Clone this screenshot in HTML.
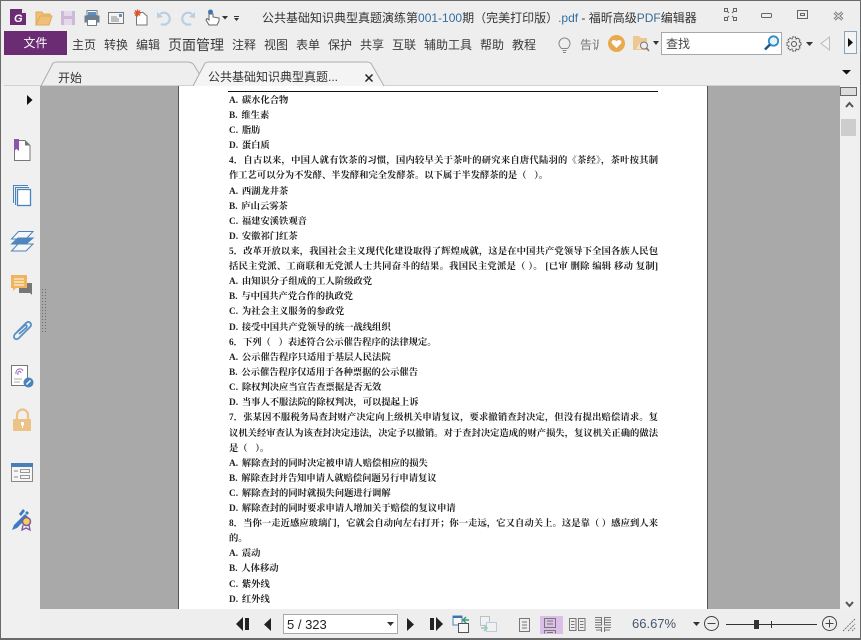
<!DOCTYPE html>
<html lang="zh"><head><meta charset="utf-8"><style>
html,body{margin:0;padding:0;width:861px;height:640px;overflow:hidden;background:#eeeeee}
body{position:relative;font-family:"Liberation Sans","Noto Sans CJK SC",sans-serif;color:#333}
.a{position:absolute}
.m{position:absolute;top:36px;font-size:12px;line-height:18px;color:#3a3a3a;white-space:nowrap}
.l{position:absolute;left:229px;width:429px;height:14px;margin-top:1px;font:700 9.3px/14px "Liberation Serif","Noto Serif CJK SC",serif;color:#222;white-space:nowrap;word-spacing:1.5px}
.j{text-align:justify;text-align-last:justify;white-space:normal;word-spacing:0}
svg{position:absolute;overflow:visible}
</style></head><body>
<!-- window border -->
<div class="a" style="left:0;top:0;width:861px;height:1px;background:#6a6a6a"></div>
<div class="a" style="left:0;top:0;width:1px;height:640px;background:#6a6a6a"></div>
<div class="a" style="left:860px;top:0;width:1px;height:640px;background:#6a6a6a"></div>
<div class="a" style="left:0;top:638px;width:861px;height:2px;background:#6a6a6a"></div>

<!-- quick access icons -->
<svg style="left:10px;top:9px" width="18" height="18"><path d="M0 0H12L16 4V16H0Z" fill="#6b2c74"/><path d="M12 0L16 4H12Z" fill="#eee"/><text x="4" y="13" font-family="Liberation Sans" font-size="11" font-weight="bold" font-style="italic" fill="#fff">G</text></svg>
<svg style="left:36px;top:11px" width="17" height="15"><path d="M0 14V1H6L7 3H14V5H4L0 14H13L16 5H4" fill="#f0c078" stroke="#e0a858"/></svg>
<svg style="left:61px;top:11px" width="15" height="14"><path d="M0 0H14V14H0Z" fill="#cdb8d6"/><rect x="3" y="0" width="8" height="5" fill="#e4d8ea"/><rect x="3" y="8" width="8" height="6" fill="#e4d8ea"/></svg>
<svg style="left:84px;top:10px" width="16" height="16"><rect x="3" y="0.5" width="10" height="5" fill="#fff" stroke="#6f7f8f"/><rect x="0.5" y="5.5" width="15" height="7" fill="#6f7f8f"/><rect x="3.5" y="9.5" width="9" height="6" fill="#fff" stroke="#6f7f8f"/><rect x="4" y="2" width="8" height="3" fill="#5a92c8"/></svg>
<svg style="left:108px;top:12px" width="16" height="12"><rect x="0.5" y="0.5" width="15" height="11" fill="#f4f4f4" stroke="#777"/><path d="M3 5H9M3 7H11M3 9H11" stroke="#888"/><rect x="11" y="2" width="3" height="3" fill="#5a92c8"/></svg>
<svg style="left:133px;top:9px" width="15" height="17"><path d="M3.500 3.500H10L14 7V16H3.500Z" fill="#fff" stroke="#777"/><path d="M1 4L8 4M4.500 0.500V7.500M2 1.500L7 6.500M7 1.500L2 6.500" stroke="#e0502a" stroke-width="1.300"/></svg>
<svg style="left:156px;top:11px" width="16" height="15"><path d="M4 3A6 6 0 1 1 5 13" fill="none" stroke="#b9cfe3" stroke-width="2.200"/><path d="M1 1L1 7L7 6Z" fill="#b9cfe3"/></svg>
<svg style="left:180px;top:11px" width="16" height="15"><path d="M12 3A6 6 0 1 0 11 13" fill="none" stroke="#b9cfe3" stroke-width="2.200"/><path d="M15 1L15 7L9 6Z" fill="#b9cfe3"/></svg>
<svg style="left:205px;top:9px" width="16" height="18"><circle cx="5.500" cy="3" r="2.500" fill="#3a78b8"/><path d="M4 5V11L2 9.500L1 11L4 16H12L14 12V9L8 8V5Z" fill="#fff" stroke="#666"/></svg>
<svg style="left:222px;top:16px" width="18" height="8"><path d="M0 0H6L3 3.500Z" fill="#333"/><path d="M12 0H17V1H12Z M12 2H17L14.500 5Z" fill="#333"/></svg>

<!-- title -->
<div class="a" style="left:262px;top:9px;font-size:12px;line-height:18px;white-space:nowrap;color:#333">公共基础知识典型真题演练第<span style="color:#2f6f9f">001-100</span>期（完美打印版）<span style="color:#2f6f9f">.pdf</span> - 福昕高级<span style="color:#3a6a90">PDF</span>编辑器</div>

<!-- window buttons -->
<svg style="left:724px;top:8px" width="14" height="14" fill="none" stroke="#666"><rect x="0.500" y="0.500" width="3" height="3"/><rect x="9.500" y="0.500" width="3" height="3"/><rect x="0.500" y="9.500" width="3" height="3"/><rect x="9.500" y="9.500" width="3" height="3"/><path d="M5 5L3 3M8 5L10 3M5 8L3 10M8 8L10 10"/></svg>
<svg style="left:761px;top:13px" width="12" height="6"><rect x="0.500" y="0.500" width="10" height="4" rx="1" fill="none" stroke="#666"/></svg>
<svg style="left:797px;top:10px" width="12" height="10" fill="none" stroke="#666"><rect x="0.500" y="0.500" width="10" height="8"/><rect x="3.500" y="3.500" width="4" height="2"/></svg>
<svg style="left:833px;top:11px" width="11" height="10" fill="none"><path d="M1.500 1.500L9.500 8.500M9.500 1.500L1.500 8.500" stroke="#777" stroke-width="3"/><path d="M1.500 1.500L9.500 8.500M9.500 1.500L1.500 8.500" stroke="#eee" stroke-width="1"/></svg>

<!-- menu bar -->
<div class="a" style="left:4px;top:31px;width:63px;height:24px;background:#6b2c74;color:#fff;font-size:12px;line-height:25px;text-align:center">文件</div>
<div class="m" style="left:72px">主页</div>
<div class="m" style="left:104px">转换</div>
<div class="m" style="left:136px">编辑</div>
<div class="m" style="left:168px;font-size:14px">页面管理</div>
<div class="m" style="left:232px">注释</div>
<div class="m" style="left:264px">视图</div>
<div class="m" style="left:296px">表单</div>
<div class="m" style="left:328px">保护</div>
<div class="m" style="left:360px">共享</div>
<div class="m" style="left:392px">互联</div>
<div class="m" style="left:424px">辅助工具</div>
<div class="m" style="left:480px">帮助</div>
<div class="m" style="left:512px">教程</div>

<svg style="left:558px;top:37px" width="13" height="17" fill="none" stroke="#888"><path d="M3.500 11.500C2 10 1 8.500 1 6.500A5.500 5.500 0 0 1 12 6.500C12 8.500 11 10 9.500 11.500Z"/><path d="M4.500 13.500H8.500M5 15.500H8"/></svg>
<div class="a" style="left:580px;top:36px;width:19px;height:18px;overflow:hidden;font-size:12px;line-height:18px;color:#777;white-space:nowrap">告诉</div>
<svg style="left:608px;top:35px" width="18" height="18"><circle cx="8.500" cy="8.500" r="8.500" fill="#e8a94f"/><path d="M8.500 13L4 8.500C2.500 6 5.500 3.500 8.500 6.200C11.500 3.500 14.500 6 13 8.500Z" fill="#fff"/></svg>
<svg style="left:633px;top:35px" width="18" height="18"><path d="M0 1H6L8 3H14V15H0Z" fill="#ecc994"/><path d="M3 14L7 8L11 14Z" fill="#f5e2c5"/><circle cx="11" cy="10.500" r="3.500" fill="#eee" stroke="#777"/><path d="M13.500 13L16 16" stroke="#777" stroke-width="1.500"/></svg>
<svg style="left:653px;top:41px" width="7" height="4"><path d="M0 0H6L3 4Z" fill="#333"/></svg>

<!-- search -->
<div class="a" style="left:661px;top:32px;width:119px;height:21px;border:1px solid #a3a9ae;background:#fff;box-sizing:content-box"></div>
<div class="a" style="left:666px;top:35px;font-size:12px;line-height:18px;color:#444">查找</div>
<svg style="left:763px;top:35px" width="17" height="16"><circle cx="10.500" cy="6" r="4.700" fill="#e8f3fa" stroke="#2d8fc2" stroke-width="1.800"/><path d="M7 9.500L2 14.500" stroke="#20507c" stroke-width="2.400"/></svg>
<svg style="left:786px;top:36px" width="16" height="16" fill="none" stroke="#555"><circle cx="8" cy="8" r="2.500"/><path d="M6.500 1H9.500L10 3L12 2L14 4L13 6L15 6.500V9.500L13 10L14 12L12 14L10 13L9.500 15H6.500L6 13L4 14L2 12L3 10L1 9.500V6.500L3 6L2 4L4 2L6 3Z" stroke-dasharray="2 0.500"/></svg>
<svg style="left:806px;top:42px" width="7" height="4"><path d="M0 0H7L3.500 4Z" fill="#333"/></svg>
<svg style="left:820px;top:36px" width="11" height="15"><path d="M9.500 1V14L1 7.500Z" fill="#f2f2f2" stroke="#bbb"/></svg>
<div class="a" style="left:844px;top:31px;width:11px;height:21px;border:1px solid #8aa3bb;background:#f4f4f4"></div>
<svg style="left:848px;top:38px" width="6" height="9"><path d="M0 0L5 4.500L0 9Z" fill="#111"/></svg>

<!-- tabs -->
<svg style="left:0;top:60px" width="861" height="28">
<path d="M41 26L52 5Q53 2 57 2H187Q192 2 194 5L203 20" fill="#eeeeee" stroke="#adadad"/>
<path d="M193 26L204 5Q205 2 209 2H366Q371 2 372 5L384 26" fill="#f4f4f4" stroke="#adadad"/>
<path d="M4 26H194M384 26H840" stroke="#b5b5b5" fill="none"/>
<path d="M842 10H851L846.500 14.500Z" fill="#111"/>
</svg>
<div class="a" style="left:58px;top:69px;font-size:12px;line-height:18px;color:#333">开始</div>
<div class="a" style="left:208px;top:68px;font-size:12px;line-height:18px;color:#333;white-space:nowrap">公共基础知识典型真题...</div>
<svg style="left:364px;top:73px" width="10" height="10"><path d="M1.500 1.500L8.500 8.500M8.500 1.500L1.500 8.500" stroke="#222" stroke-width="1.500"/></svg>

<!-- sidebar -->
<div class="a" style="left:1px;top:86px;width:39px;height:552px;background:#f0f0f0"></div>
<svg style="left:27px;top:95px" width="6" height="10"><path d="M0 0L5.500 5L0 10Z" fill="#111"/></svg>
<svg style="left:14px;top:140px" width="17" height="22"><path d="M0.500 0.500H11L16 5.500V20.500H0.500Z" fill="#fff" stroke="#777" stroke-width="1"/><path d="M11 0.500V5.500H16Z" fill="#777"/><path d="M0 -1H5V11L2.500 9L0 11Z" fill="#8e56a8"/></svg>
<svg style="left:13px;top:185px" width="19" height="23" fill="none" stroke="#4a84bc"><path d="M0.500 18V0.500H15"/><path d="M2.500 20V2.500H16"/><rect x="4.500" y="4.500" width="13" height="16" fill="#fff" stroke-width="1.300"/></svg>
<svg style="left:11px;top:231px" width="23" height="21"><path d="M7.500 0.500H22L15 8H0.500Z" fill="#f6f6f6" stroke="#4a84bc"/><path d="M7 7H22L15 13H0.500Z" fill="#4f86bd" stroke="#4a84bc"/><path d="M7 13H22L15 20H0.500Z" fill="#f6f6f6" stroke="#4a84bc"/></svg>
<svg style="left:11px;top:275px" width="22" height="23"><path d="M8 8H21V20L19 18H8Z" fill="#777"/><path d="M0 0H16V13H5L2 16V13H0Z" fill="#f0b45d"/><path d="M3 4H13M3 7H13M3 10H13" stroke="#fff"/></svg>
<svg style="left:12px;top:320px" width="21" height="23" fill="none" stroke="#5a8fc4" stroke-width="1.800"><path d="M5 12L14 3C17 0 21 4 18 7L7 18C4 21 0 18 3 14L12 6C14 4 16 6 14 8L7 14"/></svg>
<svg style="left:11px;top:365px" width="23" height="23"><rect x="0.500" y="0.500" width="16" height="20" fill="#fff" stroke="#777"/><path d="M5 9C4 4 11 2 12 6M7 10C6 6 10 5 10 8" fill="none" stroke="#9a6ab5"/><path d="M3 14H11M3 17H9" stroke="#aaa"/><circle cx="17.500" cy="17.500" r="5" fill="#4a84bc"/><path d="M15.500 19.500L19.500 15.500" stroke="#fff" stroke-width="1.500"/></svg>
<svg style="left:13px;top:409px" width="19" height="23"><path d="M4 10V6A5.500 5.500 0 0 1 15 6V10" fill="none" stroke="#ecc287" stroke-width="2.200"/><rect x="0" y="10" width="18" height="12" rx="1" fill="#ecc287"/><path d="M8 13H11V16.500H10V19H9V16.500H8Z" fill="#fff"/></svg>
<svg style="left:11px;top:463px" width="22" height="19"><rect x="0.500" y="0.500" width="21" height="18" fill="#f6f6f6" stroke="#888"/><rect x="0" y="0" width="22" height="4" fill="#4a7eb6"/><path d="M3 8H7M3 14H7" stroke="#888"/><rect x="9.500" y="6.500" width="9" height="3" fill="none" stroke="#999"/><rect x="9.500" y="12.500" width="9" height="3" fill="none" stroke="#999"/></svg>
<svg style="left:12px;top:508px" width="21" height="23"><path d="M0 22L2 17L13 6L16 9L5 20Z" fill="#3d7cc0"/><path d="M7 6L11 1L13 3L9 8Z M13 5L15 3L17 5L15 7Z" fill="#3d7cc0"/><circle cx="14.500" cy="13.500" r="4" fill="#f2d34f" stroke="#8258a0" stroke-width="1.500"/><path d="M11 17L10 22L14 20L18 22L17 17" fill="none" stroke="#8258a0" stroke-width="1.300"/></svg>

<!-- gray doc area -->
<div class="a" style="left:40px;top:86px;width:800px;height:523px;background:#a9a9a9"></div>
<svg style="left:42px;top:288px" width="5" height="45"><path d="M0.500 1V45M3.500 1V45" stroke="#6d6d6d" stroke-dasharray="1 2"/></svg>

<!-- page -->
<div class="a" style="left:178px;top:86px;width:1px;height:523px;background:#555"></div>
<div class="a" style="left:707px;top:86px;width:1px;height:523px;background:#555"></div>
<div class="a" style="left:179px;top:86px;width:528px;height:523px;background:#fff"></div>
<div class="a" style="left:228px;top:91px;width:430px;height:1px;background:#111"></div>

<div class="l" style="top:93px">A. 碳水化合物</div>
<div class="l" style="top:108px">B. 维生素</div>
<div class="l" style="top:123px">C. 脂肪</div>
<div class="l" style="top:138px">D. 蛋白质</div>
<div class="l j" style="top:153px">4．自古以来，中国人就有饮茶的习惯，国内较早关于茶叶的研究来自唐代陆羽的《茶经》，茶叶按其制</div>
<div class="l" style="top:168px">作工艺可以分为不发酵、半发酵和完全发酵茶。以下属于半发酵茶的是（&nbsp;&nbsp;）。</div>
<div class="l" style="top:184px">A. 西湖龙井茶</div>
<div class="l" style="top:199px">B. 庐山云雾茶</div>
<div class="l" style="top:214px">C. 福建安溪铁观音</div>
<div class="l" style="top:229px">D. 安徽祁门红茶</div>
<div class="l j" style="top:244px">5．改革开放以来，我国社会主义现代化建设取得了辉煌成就，这是在中国共产党领导下全国各族人民包</div>
<div class="l j" style="top:259px">括民主党派、工商联和无党派人士共同奋斗的结果。我国民主党派是（ ）。 [已审 删除 编辑 移动 复制]</div>
<div class="l" style="top:274px">A. 由知识分子组成的工人阶级政党</div>
<div class="l" style="top:289px">B. 与中国共产党合作的执政党</div>
<div class="l" style="top:304px">C. 为社会主义服务的参政党</div>
<div class="l" style="top:320px">D. 接受中国共产党领导的统一战线组织</div>
<div class="l" style="top:335px">6．下列（&nbsp;&nbsp;）表述符合公示催告程序的法律规定。</div>
<div class="l" style="top:350px">A. 公示催告程序只适用于基层人民法院</div>
<div class="l" style="top:365px">B. 公示催告程序仅适用于各种票据的公示催告</div>
<div class="l" style="top:380px">C. 除权判决应当宣告查票据是否无效</div>
<div class="l" style="top:395px">D. 当事人不服法院的除权判决，可以提起上诉</div>
<div class="l j" style="top:410px">7．张某因不服税务局查封财产决定向上级机关申请复议，要求撤销查封决定，但没有提出赔偿请求。复</div>
<div class="l j" style="top:426px">议机关经审查认为该查封决定违法，决定予以撤销。对于查封决定造成的财产损失，复议机关正确的做法</div>
<div class="l" style="top:441px">是（&nbsp;&nbsp;）。</div>
<div class="l" style="top:456px">A. 解除查封的同时决定被申请人赔偿相应的损失</div>
<div class="l" style="top:471px">B. 解除查封并告知申请人就赔偿问题另行申请复议</div>
<div class="l" style="top:486px">C. 解除查封的同时就损失问题进行调解</div>
<div class="l" style="top:501px">D. 解除查封的同时要求申请人增加关于赔偿的复议申请</div>
<div class="l j" style="top:516px">8．当你一走近感应玻璃门，它就会自动向左右打开；你一走远，它又自动关上。这是靠（ ）感应到人来</div>
<div class="l" style="top:531px">的。</div>
<div class="l" style="top:546px">A. 震动</div>
<div class="l" style="top:561px">B. 人体移动</div>
<div class="l" style="top:577px">C. 紫外线</div>
<div class="l" style="top:592px">D. 红外线</div>

<!-- scrollbar -->
<div class="a" style="left:840px;top:86px;width:20px;height:523px;background:#f0f0f0"></div>
<div class="a" style="left:840px;top:87px;width:15px;height:7px;border:1px solid #666;background:#dcdcdc"></div>
<svg style="left:845px;top:102px" width="9" height="6"><path d="M1 5L4.500 1L8 5" fill="none" stroke="#555" stroke-width="2"/></svg>
<div class="a" style="left:841px;top:119px;width:15px;height:17px;background:#cdcdcd"></div>
<svg style="left:845px;top:601px" width="9" height="6"><path d="M1 1L4.500 5L8 1" fill="none" stroke="#555" stroke-width="2"/></svg>

<!-- status bar -->
<svg style="left:236px;top:617px" width="14" height="14"><path d="M7 0V14L0 7Z" fill="#222"/><path d="M9 1H13V13H9Z" fill="#222"/></svg>
<svg style="left:264px;top:618px" width="8" height="13"><path d="M7 0V13L0 6.500Z" fill="#222"/></svg>
<div class="a" style="left:283px;top:614px;height:18px;border:1px solid #a9a9a9;background:#fff;font-size:13px;line-height:19px;color:#222;padding-left:3px;box-sizing:content-box;width:110px">5 / 323</div>
<svg style="left:387px;top:622px" width="7" height="4"><path d="M0 0H7L3.500 4Z" fill="#333"/></svg>
<svg style="left:407px;top:618px" width="8" height="13"><path d="M0 0V13L7 6.500Z" fill="#222"/></svg>
<svg style="left:430px;top:617px" width="14" height="14"><path d="M0 1H4V13H0Z" fill="#222"/><path d="M6 0L13 7L6 14Z" fill="#222"/></svg>
<svg style="left:453px;top:616px" width="18" height="17"><rect x="0" y="0" width="9" height="9" fill="#f6f6f6" stroke="#4a84bc"/><rect x="0" y="0" width="9" height="2" fill="#3a74ad"/><rect x="5.500" y="7.500" width="10" height="9" fill="#f6f6f6" stroke="#555"/><path d="M16 4H10M13 1L10 4L13 7" fill="none" stroke="#3b9a7a" stroke-width="1.500"/></svg>
<svg style="left:480px;top:616px" width="18" height="17" opacity="0.45"><rect x="0.500" y="0.500" width="9" height="9" fill="#f6f6f6" stroke="#888"/><rect x="6.500" y="6.500" width="10" height="9" fill="#f6f6f6" stroke="#7aa3c9"/><path d="M1 12H7M4 9L7 12L4 15" fill="none" stroke="#3b9a7a" stroke-width="1.500"/></svg>
<svg style="left:519px;top:618px" width="11" height="14" fill="none" stroke="#777"><rect x="0.500" y="0.500" width="10" height="13"/><path d="M3 4H8M3 7H8M3 10H8"/></svg>
<div class="a" style="left:540px;top:616px;width:23px;height:18px;background:#dcbfe8"></div>
<svg style="left:544px;top:618px" width="12" height="16" fill="none" stroke="#777"><rect x="0.500" y="0.500" width="11" height="9"/><path d="M3 3H9M3 6H9M0.500 15.500V12.500H11.500V15.500M3 14.500H9"/></svg>
<svg style="left:569px;top:618px" width="16" height="13" fill="none" stroke="#777"><rect x="0.500" y="0.500" width="6.500" height="12"/><rect x="9.500" y="0.500" width="6.500" height="12"/><path d="M2 3.500H5.500M2 6.500H5.500M2 9.500H5.500M11 3.500H14.500M11 6.500H14.500M11 9.500H14.500"/></svg>
<svg style="left:595px;top:617px" width="16" height="16" fill="none" stroke="#777"><path d="M0 .5H6.500V8H0M0 3H6M0 5.500H6M16 .5H9.500V8H16M16 3H10M16 5.500H10M0 10.500H6.500V15M9.500 15V10.500H16M1 13H6M10 13H15"/></svg>
<div class="a" style="left:632px;top:615px;font-size:13px;line-height:18px;color:#44586c">66.67%</div>
<svg style="left:693px;top:622px" width="7" height="4"><path d="M0 0H7L3.500 4Z" fill="#333"/></svg>
<svg style="left:704px;top:616px" width="16" height="16" fill="none" stroke="#444"><circle cx="7.500" cy="7.500" r="7"/><path d="M3.500 7.500H11.500"/></svg>
<div class="a" style="left:726px;top:624px;width:91px;height:1px;background:#333"></div>
<div class="a" style="left:754px;top:620px;width:5px;height:9px;background:#333"></div>
<div class="a" style="left:771px;top:621px;width:1px;height:7px;background:#333"></div>
<svg style="left:822px;top:616px" width="16" height="16" fill="none" stroke="#444"><circle cx="7.500" cy="7.500" r="7"/><path d="M3.500 7.500H11.500M7.500 3.500V11.500"/></svg>
<svg style="left:843px;top:618px" width="13" height="13" stroke="#777" fill="none"><path d="M0 13L12 1M5 13L12 6M9 13L12 10" stroke-dasharray="2 1"/></svg>
</body></html>
